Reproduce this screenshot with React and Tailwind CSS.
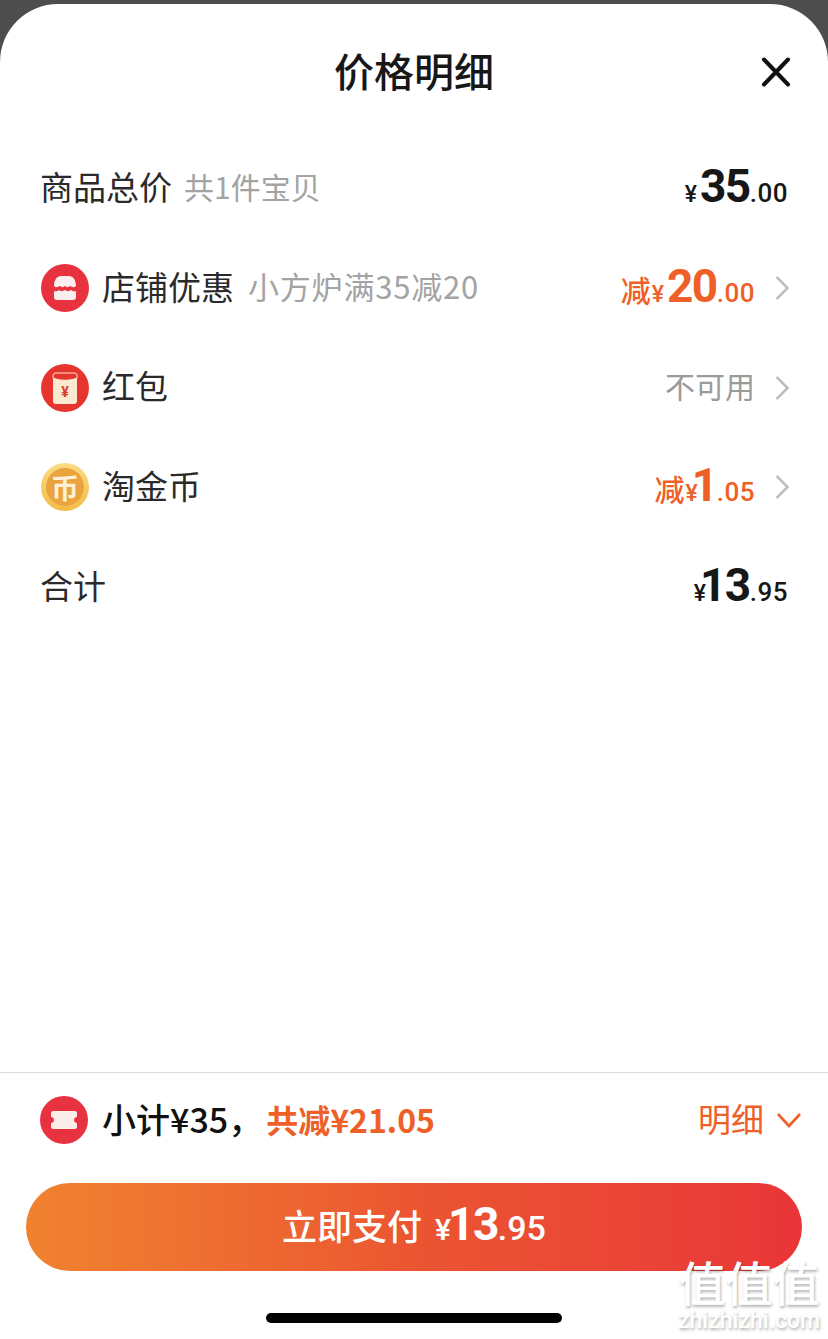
import React from 'react';

const cjk = { fontFamily: '"Noto Sans CJK SC", "Noto Sans", sans-serif' };

function Price({ prefix, whole, cents, tight, color = 'text-[#171717]' }) {
  return (
    <div className={`flex items-baseline font-['Roboto',sans-serif] ${color}`}>
      {prefix && <span className="text-[30px] font-medium font-['Noto_Sans_CJK_SC'] mr-[1px]">{prefix}</span>}
      <span className="text-[23px] font-medium mr-[3px]">¥</span>
      <span className={`text-[46px] leading-none font-bold tracking-[-1.5px] ${tight ? '-ml-[9px]' : ''}`}>{whole}</span>
      <span className="text-[26px] font-medium tracking-[0.5px]">.{cents}</span>
    </div>
  );
}

function Chevron() {
  return (
    <svg width="14" height="26" viewBox="0 0 14 26" fill="none" className="ml-[21px]">
      <path d="M0.500 2l11 11-11 11" stroke="#bdbdbd" strokeWidth="2.6" />
    </svg>
  );
}

function ShopIcon() {
  return (
    <svg width="48" height="48" viewBox="0 0 48 48">
      <circle cx="24" cy="24" r="24" fill="#e8323f" />
      <path d="M13 22c0-6 3-10 7-10h8c4 0 7 4 7 10-2 2-4 1-6 0-1.500 1.500-3.500 1.500-5 0-1.500 1.500-3.500 1.500-5 0-2 1-4 2-6 0z" fill="#fbeeee" />
      <path d="M13 27c2 1 3.500 0 5-1 1.500 1.500 4 1.500 6 0 2 1.500 4.500 1.500 6 0 1.500 1 3 2 5 1v6c0 2-1 3-3 3H16c-2 0-3-1-3-3z" fill="#fbeeee" />
    </svg>
  );
}

function PacketIcon() {
  return (
    <svg width="48" height="48" viewBox="0 0 48 48">
      <circle cx="24" cy="24" r="24" fill="#e5352c" />
      <rect x="12" y="9" width="24" height="31" rx="3" fill="#fbe9d0" />
      <path d="M12 12c0-2 1-3 3-3h18c2 0 3 1 3 3v2c-7 3-17 3-24 0z" fill="#e5352c" stroke="#fbe9d0" strokeWidth="1" />
      <text x="24" y="33" textAnchor="middle" fontSize="14" fontWeight="700" fill="#d9402f" fontFamily="Roboto, sans-serif">¥</text>
    </svg>
  );
}

function CoinIcon() {
  return (
    <div className="w-[48px] h-[48px] rounded-full bg-gradient-to-b from-[#f9dc82] to-[#f4bb45] flex items-center justify-center">
      <div className="w-[38px] h-[38px] rounded-full bg-[#eaa33d] flex items-center justify-center text-[#fdf0d8] text-[28px] leading-none font-bold" style={cjk}>币</div>
    </div>
  );
}

function TicketIcon() {
  return (
    <svg width="48" height="48" viewBox="0 0 48 48">
      <circle cx="24" cy="24" r="24" fill="#e8323f" />
      <path d="M13 15h22c1 0 2 1 2 2v4c-2 0-3 1.500-3 3s1 3 3 3v4c0 1-1 2-2 2H13c-1 0-2-1-2-2v-4c2 0 3-1.500 3-3s-1-3-3-3v-4c0-1 1-2 2-2z" fill="#fbeeea" />
    </svg>
  );
}

export default function App() {
  return (
    <div className="relative h-[1339px] w-[828px] overflow-hidden bg-[#4d4d4d] pt-[4px]" style={cjk}>
      <div className="h-full flex flex-col bg-white rounded-t-[58px]">
        <header className="relative h-[136px] shrink-0 flex items-center justify-center">
          <h1 className="text-[40px] font-medium text-[#171717] leading-none mb-[5px]">价格明细</h1>
          <button className="absolute right-[37px] top-[53px]">
            <svg width="30" height="30" viewBox="0 0 30 30" fill="none">
              <path d="M3 2.500l24 25M27 2.500l-24 25" stroke="#111" strokeWidth="4" strokeLinecap="round" />
            </svg>
          </button>
        </header>

        <main className="flex-1 flex flex-col text-[#2a2a2a]">
          <div className="h-[96px] flex items-center justify-between pl-[40px] pr-[40px]">
            <div className="flex items-center text-[33px] mb-[3px]">
              <span>商品总价</span>
              <span className="ml-[12px] text-[#a3a3a3] text-[30px]">共1件宝贝</span>
            </div>
            <Price whole="35" cents="00" />
          </div>

          <div className="h-[104px] flex items-center justify-between pl-[41px] pr-[38px]">
            <div className="flex items-center text-[33px]">
              <ShopIcon />
              <span className="ml-[13px] mb-[3px]">店铺优惠</span>
              <span className="ml-[14px] mb-[3px] text-[#a3a3a3] text-[31px] tracking-[0.8px]">小方炉满35减20</span>
            </div>
            <div className="flex items-center">
              <Price prefix="减" whole="20" cents="00" color="text-[#ee6028]" />
              <Chevron />
            </div>
          </div>

          <div className="h-[95px] flex items-center justify-between pl-[41px] pr-[38px]">
            <div className="flex items-center text-[33px]">
              <PacketIcon />
              <span className="ml-[13px] mb-[3px]">红包</span>
            </div>
            <div className="flex items-center">
              <span className="text-[30px] text-[#9a9a9a] mb-[4px]">不可用</span>
              <Chevron />
            </div>
          </div>

          <div className="h-[104px] flex items-center justify-between pl-[41px] pr-[38px]">
            <div className="flex items-center text-[33px]">
              <CoinIcon />
              <span className="ml-[13px] mb-[3px]">淘金币</span>
            </div>
            <div className="flex items-center">
              <Price prefix="减" whole="1" cents="05" tight color="text-[#ee6028]" />
              <Chevron />
            </div>
          </div>

          <div className="h-[96px] flex items-center justify-between pl-[40px] pr-[40px]">
            <span className="text-[33px] mb-[3px]">合计</span>
            <Price whole="13" cents="95" tight />
          </div>
        </main>

        <footer className="h-[267px] shrink-0 border-t border-[#dcdcdc] flex flex-col">
          <div className="h-[94px] mb-[16px] shrink-0 flex items-center justify-between pl-[40px] pr-[26px]">
            <div className="flex items-center text-[34px] font-medium">
              <TicketIcon />
              <span className="ml-[14px] mb-[3px] text-[#111]">小计¥35，</span>
              <span className="text-[#ee6028] text-[32px] ml-[4px] mb-[3px] font-bold">共减¥21.05</span>
            </div>
            <div className="flex items-center text-[#ee6028] text-[33px]">
              <span className="mb-[3px]">明细</span>
              <svg width="26" height="16" viewBox="0 0 26 16" fill="none" className="ml-[12px]">
                <path d="M2 2l11 12L24 2" stroke="#ee6028" strokeWidth="2.6" />
              </svg>
            </div>
          </div>
          <div className="mx-[26px] h-[88px] shrink-0 rounded-full bg-gradient-to-r from-[#f0822f] via-[#eb5531] via-50% to-[#e93539] flex items-center justify-center text-white">
            <span className="text-[35px] font-medium mr-[13px] mb-[4px]">立即支付</span>
            <div className="flex items-baseline font-['Roboto',sans-serif]">
              <span className="text-[30px] font-medium">¥</span>
              <span className="text-[46px] leading-none font-bold tracking-[-1.5px] -ml-[3px]">13</span>
              <span className="text-[34px] font-medium">.95</span>
            </div>
          </div>
          <div className="mt-[42px] self-center w-[296px] h-[10px] rounded-full bg-black" />
        </footer>
      </div>

      {/* watermark */}
      <div className="absolute left-[678px] top-[1255px] w-[142px] flex flex-col items-center text-white [text-shadow:1px_2px_3px_rgba(0,0,0,0.3)] pointer-events-none">
        <span className="text-[47px] leading-[52px] font-medium whitespace-nowrap">值值值</span>
        <span className="mt-[2px] text-[23px] leading-[24px] font-['Roboto',sans-serif] font-medium whitespace-nowrap">zhizhizhi.com</span>
      </div>
    </div>
  );
}
